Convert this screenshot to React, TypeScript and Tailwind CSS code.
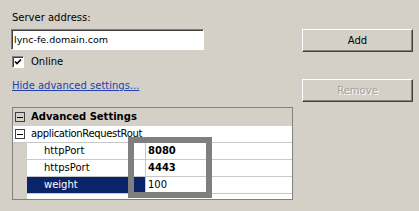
import React from 'react';

const ROWS = [
  { name: 'httpPort', value: '8080', bold: true },
  { name: 'httpsPort', value: '4443', bold: true },
  { name: 'weight', value: '100', bold: false, selected: true },
];

function MinusBox() {
  return (
    <div className="w-[10px] h-[10px] border border-[#404040] flex items-center justify-center">
      <div className="w-[6px] h-px bg-black" />
    </div>
  );
}

export default function App() {
  return (
    <div className="w-[419px] h-[211px] bg-[#d4d0c8] overflow-hidden font-['DejaVu_Sans',sans-serif] text-[10px] text-black flex">
      {/* left column */}
      <div className="pl-[11px] pt-[12px] w-[302px] flex flex-col">
        <div className="ml-px leading-[12px]">Server address:</div>
        <div className="mt-[5px] w-[193px] h-[21px] bg-white border border-t-[#808080] border-l-[#808080] border-b-white border-r-white shadow-[inset_1px_1px_0_#404040] pl-[2px] pt-px">
          <span className="text-[9.5px] leading-[18px]">lync-fe.domain.com</span>
        </div>
        <div className="mt-[6px] ml-px flex items-center gap-[7px] h-[12px]">
          <div className="w-[12px] h-[12px] bg-white border border-t-[#808080] border-l-[#808080] border-b-white border-r-white shadow-[inset_1px_1px_0_#404040] flex items-center justify-center">
            <svg width="8" height="8" viewBox="0 0 8 8">
              <path d="M1 3.5 L3 5.5 L7 1.5" stroke="#000" strokeWidth="1.6" fill="none" />
            </svg>
          </div>
          <span className="leading-[12px]">Online</span>
        </div>
        <div className="mt-[12px] ml-px leading-[12px] text-[#2340b0] underline">Hide advanced settings...</div>

        {/* advanced settings grid */}
        <div className="mt-[15px] ml-px w-[281px] h-[93px] border border-[#808080] relative flex flex-col">
          <div className="h-[18px] flex items-center">
            <div className="w-[14px] pl-[2px]">
              <MinusBox />
            </div>
            <span className="ml-[4px] font-bold leading-[18px]">Advanced Settings</span>
          </div>
          <div className="h-[17px] flex bg-white border-b border-[#c8c8c8]">
            <div className="w-[14px] pl-[2px] flex items-center">
              <MinusBox />
            </div>
            <div className="w-[118px] pl-[4px] whitespace-nowrap leading-[16px] tracking-[-0.35px]">applicationRequestRout</div>
          </div>
          {ROWS.map((row) => (
            <div key={row.name} className="h-[17px] flex">
              <div className="w-[14px]" />
              <div className="flex-1 flex bg-white border-b border-[#c8c8c8]">
                <div
                  className={`w-[118px] pl-[17px] leading-[16px] ${row.selected ? 'bg-[#0a246a] text-white' : ''}`}
                >
                  {row.name}
                </div>
                <div className="w-px bg-[#c8c8c8]" />
                <div className={`pl-[2px] leading-[16px] ${row.bold ? 'font-bold' : ''}`}>{row.value}</div>
              </div>
            </div>
          ))}
          <div className="flex-1 flex">
            <div className="w-[14px]" />
            <div className="flex-1 bg-white" />
          </div>

          {/* highlight box drawn over the grid */}
          <div className="absolute left-[115px] top-[29px] w-[84px] h-[61px] border-[6px] border-[#7f7f7f]" />
        </div>
      </div>

      {/* right buttons */}
      <div className="pt-[29px] flex flex-col gap-[27px]">
        <div className="w-[111px] h-[23px] border border-t-white border-l-white border-b-[#404040] border-r-[#404040] shadow-[inset_-1px_-1px_0_#808080] flex items-center justify-center">
          Add
        </div>
        <div className="w-[111px] h-[23px] border border-t-white border-l-white border-b-[#404040] border-r-[#404040] shadow-[inset_-1px_-1px_0_#808080] flex items-center justify-center text-[#a0a0a0] [text-shadow:1px_1px_0_#fff]">
          Remove
        </div>
      </div>
    </div>
  );
}
